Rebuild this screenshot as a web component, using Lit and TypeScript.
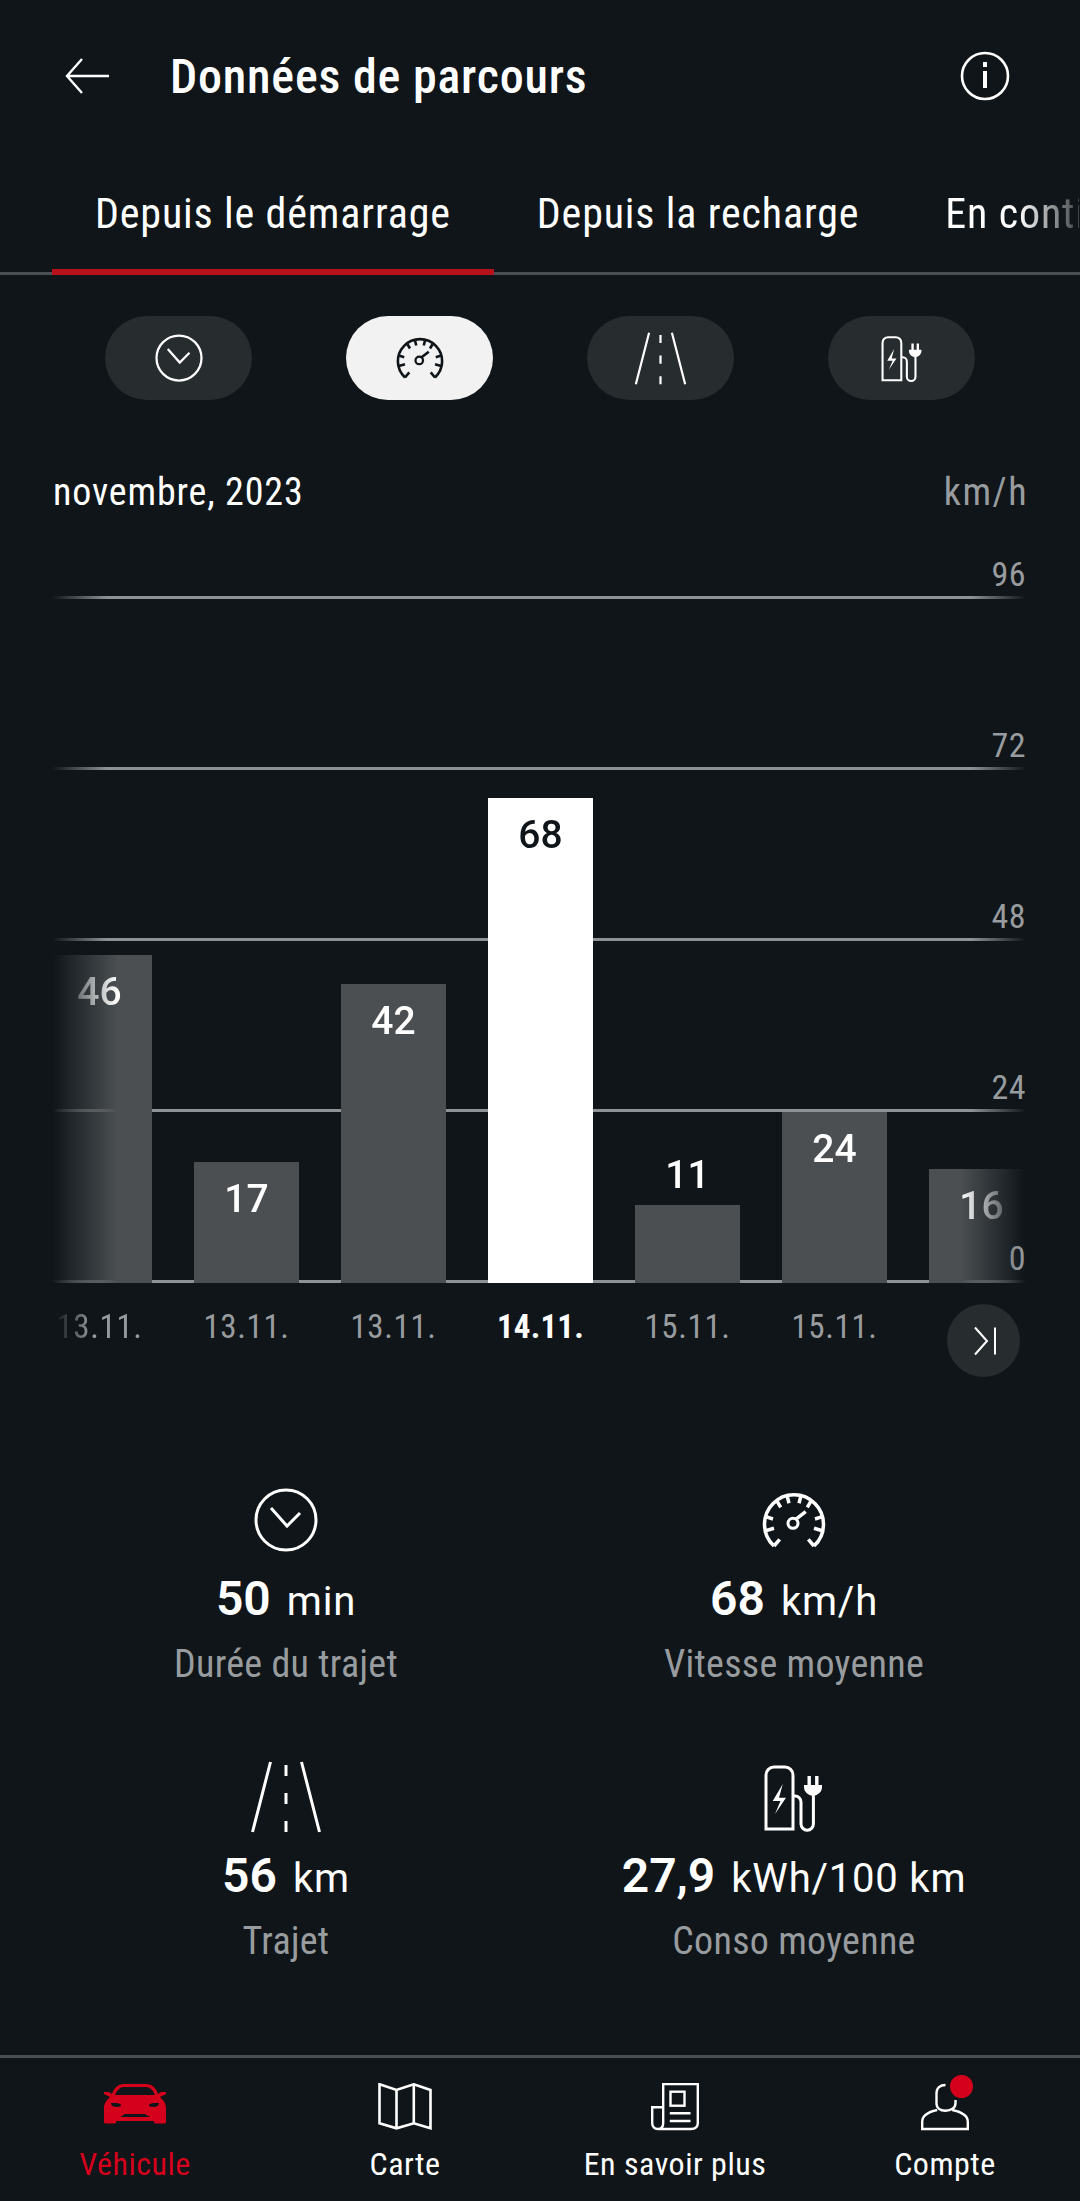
import { LitElement, html, css } from 'lit';
import { customElement } from 'lit/decorators.js';

const arrowBack = html`<svg class="ico back" viewBox="0 0 46 38"><path d="M45 19H4M18 2 3 19l15 17" fill="none" stroke="#fff" stroke-width="2.4"/></svg>`;
const infoIcon = html`<svg class="ico info" viewBox="0 0 50 50"><circle cx="25" cy="25" r="23" fill="none" stroke="#fff" stroke-width="2.6"/><rect x="23" y="11" width="4" height="5" fill="#fff"/><rect x="23" y="20" width="4" height="17" fill="#fff"/></svg>`;

const clock = (size: number) => html`<svg style="width:${size}px;height:${size}px" viewBox="0 0 64 64" fill="none" stroke="currentColor">
  <circle cx="32" cy="32" r="30" stroke-width="3"/>
  <path d="M17 20 33 38 46 25" stroke-width="3"/>
</svg>`;

const gauge = (size: number) => html`<svg style="width:${size}px;height:${size}px" viewBox="0 0 64 64" fill="none" stroke="currentColor" stroke-width="3.5">
  <path d="M12 58A29.5 29.5 0 1 1 52 58"/>
  <path d="M12 58 17.7 51.3M52 58 46.3 51.3"/>
  <path d="M25.3 8.7 27 15.3M38.7 8.7 37 15.3M15.3 13.7 18.7 19.3M48.7 13.7 45.3 19.3M3.7 28.7 11 31M60.3 28.7 53 31M3.7 42.7 12 40.3M60.3 42.7 52 40.3"/>
  <circle cx="31" cy="35.3" r="5" stroke-width="3"/>
  <path d="M33.7 31.3 43.7 23.7"/>
</svg>`;

const road = (size: number) => html`<svg style="width:${size}px;height:${size}px" viewBox="0 0 72 72" fill="none" stroke="currentColor" stroke-width="3">
  <path d="M20.5 1 2.5 71M51.5 1 69.5 71"/>
  <path d="M36 4V15M36 32V43M36 60V71"/>
</svg>`;

const charger = (size: number) => html`<svg style="width:${size}px;height:${size}px" viewBox="0 0 70 72">
  <path d="M7 68V14a8 8 0 0 1 8-8h11a8 8 0 0 1 8 8v54Z" fill="none" stroke="currentColor" stroke-width="3"/>
  <path d="M23.8 23 13.7 40h7.8L16 53l11-16.3h-7Z" fill="currentColor"/>
  <path d="M34 35h2a6 6 0 0 1 6 6v22a6.2 6.2 0 0 0 12.4 0V33" fill="none" stroke="currentColor" stroke-width="3"/>
  <path d="M45 24h18v2c0 5-4 8-9 9-5-1-9-4-9-9ZM48.5 15h3.4v9h-3.4ZM56.1 15h3.4v9h-3.4Z" fill="currentColor"/>
</svg>`;

const carIcon = html`<svg class="nav-ico" viewBox="0 0 64 48" fill="#d5001c">
  <path fill-rule="evenodd" d="M1 9h5l3 2c2-6 6-10 12-10h22c6 0 10 4 12 10l3-2h5v2l-6 3c3 3 6 6 6 11v14c0 1-1 1.500-2 1.500h-8c-1 0-2-.500-2-1.500v-1H13v1c0 1-1 1.500-2 1.500H3c-1 0-2-.500-2-1.500V25c0-5 3-8 6-11l-6-3ZM21 4c-4 0-7 3-9 8h40c-2-5-5-8-9-8ZM8 20c0 3 3 4 6 4s4-1 4-2-3-2-6-2ZM56 20h-4c-3 0-6 1-6 2s1 2 4 2 6-1 6-4ZM22 31l-5 3h30l-5-3Z"/>
</svg>`;

const mapIcon = html`<svg class="nav-ico" viewBox="0 0 64 48" fill="none" stroke="currentColor" stroke-width="2.6">
  <path d="M6.500 1.300 23.500 7 40.800 1.300 57.500 7V45.300L40.800 40.300 23.500 45.300 6.500 40.300Z"/>
  <path d="M23.500 7V45.300M40.800 1.300V40.300"/>
</svg>`;

const newsIcon = html`<svg class="nav-ico" viewBox="0 0 64 48" fill="none" stroke="currentColor" stroke-width="2.4">
  <path d="M20.200 40V1H54.800V40C54.800 44 52 46 48 46H15C11.500 46 9.200 44 9.200 40V24.300H20.200M20.200 40C20.200 44 18 46 15 46"/>
  <rect x="27.500" y="8.700" width="14" height="14"/>
  <path d="M26.800 30.300H47.500M26.800 38H47.500"/>
</svg>`;

const userIcon = html`<svg class="nav-ico" viewBox="0 0 64 48" fill="none" stroke="currentColor" stroke-width="2.4">
  <path d="M32.500 2C27 2 23.500 5 23.500 10.300V20.300C23.500 25 27 27.700 32.500 27.700S42.500 25 42.500 20.300V17"/>
  <path d="M24.200 27C15 29 9.200 33 9.200 38.700V46H54.800V38.700C54.800 33 49 29 39.200 27"/>
</svg>`;

type Bar = { value: number; date: string; active?: boolean; outside?: boolean };

const BARS: Bar[] = [
  { value: 46, date: '13.11.' },
  { value: 17, date: '13.11.' },
  { value: 42, date: '13.11.' },
  { value: 68, date: '14.11.', active: true },
  { value: 11, date: '15.11.', outside: true },
  { value: 24, date: '15.11.' },
  { value: 16, date: '' },
];

const GRID = [96, 72, 48, 24, 0];
const PX_PER_UNIT = 171 / 24;

@customElement('app-root')
export class AppRoot extends LitElement {
  static styles = css`
    :host {
      display: block;
      width: 1080px;
      height: 2201px;
      background: #0f1519;
      color: #fff;
      font-family: Roboto, sans-serif;
      font-stretch: 75%;
      overflow: hidden;
    }
    * { box-sizing: border-box; }
    svg { display: block; }

    .page { display: flex; flex-direction: column; height: 100%; }

    .header {
      height: 152px;
      display: flex;
      align-items: center;
      padding: 0 70px 0 64px;
    }
    .back { width: 46px; height: 38px; }
    .title { font-size: 48px; font-weight: 500; letter-spacing: 0.8px; margin-left: 60px; flex: 1; }
    .info { width: 50px; height: 50px; }

    .tabs {
      height: 123px;
      display: flex;
      padding-left: 52px;
      background: linear-gradient(#4a4f52, #4a4f52) bottom / 100% 3px no-repeat;
      overflow: hidden;
    }
    .tab {
      flex: none;
      position: relative;
      height: 123px;
      padding: 37px 43px 0;
      font-size: 42px;
      letter-spacing: 0.85px;
      white-space: nowrap;
    }
    .tab.active::after {
      content: '';
      position: absolute;
      left: 0;
      right: 0;
      bottom: 0;
      height: 6px;
      background: #b5121b;
    }
    .tab.last {
      width: 177px;
      padding-right: 0;
      height: 120px;
      overflow: hidden;
      mask-image: linear-gradient(90deg, #000 117px, #0004 172px);
    }

    .pills {
      display: flex;
      gap: 94px;
      padding: 41px 0 0 105px;
    }
    .pill {
      width: 147px;
      height: 84px;
      border-radius: 42px;
      background: #272c2f;
      display: flex;
      align-items: center;
      justify-content: center;
      color: #fff;
    }
    .pill.active { background: #f2f2f2; color: #0f1519; }

    .period {
      display: flex;
      justify-content: space-between;
      padding: 68px 52px 0 53px;
      font-size: 38px;
      letter-spacing: 0.85px;
      line-height: 48px;
    }
    .period .unit { color: #999c9f; letter-spacing: 1.5px; }

    .chart {
      margin: 35px 54px 0 52px;
      display: grid;
      height: 756px;
    }
    .grid-layer, .bars { grid-area: 1 / 1; }

    .grid-layer { display: flex; flex-direction: column; }
    .grid-row { height: 171px; display: flex; flex-direction: column; justify-content: flex-end; flex: none; }
    .grid-row:first-child { height: 48px; }
    .grid-label {
      text-align: right;
      font-size: 34px;
      letter-spacing: 0.5px;
      line-height: 32px;
      color: #999c9f;
      margin-bottom: 6px;
    }
    .grid-line {
      height: 3px;
      background: linear-gradient(90deg, transparent 0, #8e9295 55px, #8e9295 calc(100% - 55px), transparent 100%);
    }

    .bars {
      display: flex;
      gap: 42px;
      align-items: flex-end;
      margin-left: -5px;
      height: 732px;
      overflow: hidden;
      mask-image: linear-gradient(90deg, transparent 5px, #000 70px, #000 calc(100% - 65px), transparent 100%);
    }
    .bar-col { flex: none; width: 105px; display: flex; flex-direction: column; align-items: center; }
    .bar { width: 100%; background: #4b4f52; text-align: center; padding-top: 15px; }
    .bar.active { background: #fff; color: #0f1519; }
    .value { font-size: 39px; line-height: 44px; font-weight: 500; font-stretch: 100%; }
    .value.outside { margin-bottom: 8px; }

    .dates {
      display: flex;
      gap: 42px;
      margin: 0 0 0 47px;
      height: 0;
      align-items: flex-start;
    }
    .date { flex: none; width: 105px; text-align: center; font-size: 33px; letter-spacing: 0.6px; line-height: 40px; color: #999c9f; }
    .date.active { color: #fff; font-weight: 700; letter-spacing: 0.2px; }
    .date.first { mask-image: linear-gradient(90deg, transparent 8px, #000 45px); }
    .next {
      width: 73px;
      height: 73px;
      border-radius: 50%;
      background: #272c2f;
      margin: -3px 0 0 18px;
      flex: none;
      display: flex;
      align-items: center;
      justify-content: center;
    }

    .stats {
      display: grid;
      grid-template-columns: 508px 508px;
      padding: 0 32px;
      margin-top: 177px;
    }
    .stat { display: flex; flex-direction: column; align-items: center; height: 277px; }
    .stat-icon { height: 72px; display: flex; align-items: center; justify-content: center; }
    .stat-value { display: flex; align-items: baseline; gap: 16px; margin-top: 16px; line-height: 54px; font-stretch: 100%; }
    .stat-value b { font-size: 48px; font-weight: 600; }
    .stat-value span { font-size: 40px; letter-spacing: 0.8px; }
    .stat-label { font-size: 38px; letter-spacing: 0.3px; line-height: 46px; color: #999c9f; margin-top: 12px; }

    .nav {
      margin-top: auto;
      height: 146px;
      border-top: 3px solid #4a4f52;
      display: grid;
      grid-template-columns: repeat(4, 270px);
    }
    .nav-item { display: flex; flex-direction: column; align-items: center; padding-top: 25px; font-size: 32px; letter-spacing: 0.5px; position: relative; }
    .nav-item.active { color: #d5001c; }
    .nav-ico { height: 48px; width: 64px; }
    .nav-label { margin-top: 13px; line-height: 40px; }
    .dot { position: absolute; width: 23px; height: 23px; border-radius: 50%; background: #d5001c; top: 17px; left: 140px; }
  `;

  render() {
    return html`
      <div class="page">
        <div class="header">
          ${arrowBack}
          <div class="title">Données de parcours</div>
          ${infoIcon}
        </div>
        <div class="tabs">
          <div class="tab active">Depuis le démarrage</div>
          <div class="tab">Depuis la recharge</div>
          <div class="tab last">En continu</div>
        </div>
        <div class="pills">
          <div class="pill">${clock(48)}</div>
          <div class="pill active">${gauge(48)}</div>
          <div class="pill">${road(53)}</div>
          <div class="pill">${charger(50)}</div>
        </div>
        <div class="period"><span>novembre, 2023</span><span class="unit">km/h</span></div>
        <div class="chart">
          <div class="grid-layer">
            ${GRID.map(g => html`<div class="grid-row"><div class="grid-label">${g}</div><div class="grid-line"></div></div>`)}
          </div>
          <div class="bars">
            ${BARS.map(b => html`
              <div class="bar-col">
                ${b.outside ? html`<div class="value outside">${b.value}</div>` : ''}
                <div class="bar ${b.active ? 'active' : ''}" style="height:${Math.round(b.value * PX_PER_UNIT)}px">
                  ${b.outside ? '' : html`<div class="value">${b.value}</div>`}
                </div>
              </div>`)}
          </div>
        </div>
        <div class="dates">
          ${BARS.slice(0, 6).map((b, i) => html`<div class="date ${b.active ? 'active' : ''} ${i === 0 ? 'first' : ''}">${b.date}</div>`)}
          <div class="next"><svg width="30" height="30" viewBox="0 0 30 30" fill="none" stroke="#fff" stroke-width="2"><path d="M6 1.500 18 15 6 28.500M26 1.500V28.500"/></svg></div>
        </div>
        <div class="stats">
          <div class="stat">
            <div class="stat-icon">${clock(64)}</div>
            <div class="stat-value"><b>50</b><span>min</span></div>
            <div class="stat-label">Durée du trajet</div>
          </div>
          <div class="stat">
            <div class="stat-icon">${gauge(64)}</div>
            <div class="stat-value"><b>68</b><span>km/h</span></div>
            <div class="stat-label">Vitesse moyenne</div>
          </div>
          <div class="stat">
            <div class="stat-icon">${road(72)}</div>
            <div class="stat-value"><b>56</b><span>km</span></div>
            <div class="stat-label">Trajet</div>
          </div>
          <div class="stat">
            <div class="stat-icon">${charger(72)}</div>
            <div class="stat-value"><b>27,9</b><span>kWh/100 km</span></div>
            <div class="stat-label">Conso moyenne</div>
          </div>
        </div>
        <div class="nav">
          <div class="nav-item active">${carIcon}<div class="nav-label">Véhicule</div></div>
          <div class="nav-item">${mapIcon}<div class="nav-label">Carte</div></div>
          <div class="nav-item">${newsIcon}<div class="nav-label">En savoir plus</div></div>
          <div class="nav-item">${userIcon}<div class="dot"></div><div class="nav-label">Compte</div></div>
        </div>
      </div>
    `;
  }
}
